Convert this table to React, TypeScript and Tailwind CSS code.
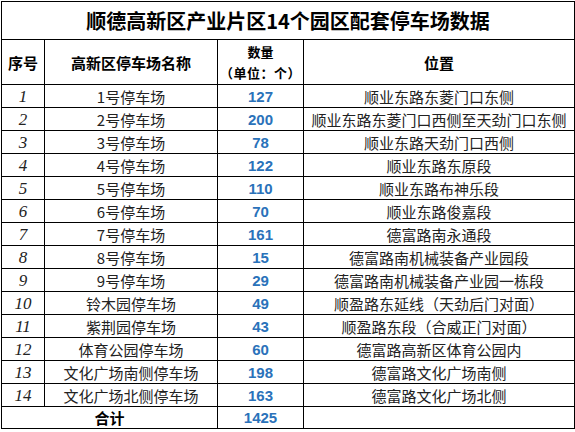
const rows: [string, number, string][] = [
  ["1号停车场", 127, "顺业东路东菱门口东侧"],
  ["2号停车场", 200, "顺业东路东菱门口西侧至天劲门口东侧"],
  ["3号停车场", 78, "顺业东路天劲门口西侧"],
  ["4号停车场", 122, "顺业东路东原段"],
  ["5号停车场", 110, "顺业东路布神乐段"],
  ["6号停车场", 70, "顺业东路俊嘉段"],
  ["7号停车场", 161, "德富路南永通段"],
  ["8号停车场", 15, "德富路南机械装备产业园段"],
  ["9号停车场", 29, "德富路南机械装备产业园一栋段"],
  ["铃木园停车场", 49, "顺盈路东延线（天劲后门对面）"],
  ["紫荆园停车场", 43, "顺盈路东段（合威正门对面）"],
  ["体育公园停车场", 60, "德富路高新区体育公园内"],
  ["文化广场南侧停车场", 198, "德富路文化广场南侧"],
  ["文化广场北侧停车场", 163, "德富路文化广场北侧"],
];

const cjk = "font-['Noto_Sans_CJK_SC',sans-serif]";
const cell = "border border-black p-0 text-center align-middle leading-none";

export default function App() {
  const total = rows.reduce((s, r) => s + r[1], 0);
  return (
    <div className="h-[432px] w-[575px] overflow-hidden bg-white pl-px pt-px">
      <table className={`w-[573px] table-fixed border-collapse ${cjk} text-[#222]`}>
        <colgroup>
          <col className="w-[43px]" />
          <col className="w-[173px]" />
          <col className="w-[86px]" />
          <col className="w-[271px]" />
        </colgroup>
        <tbody>
          <tr>
            <td colSpan={4} className={`${cell} h-[38px] text-[20px] font-bold text-black`}>
              顺德高新区产业片区14个园区配套停车场数据
            </td>
          </tr>
          <tr className="font-bold text-black">
            <td className={`${cell} h-[45px] text-[15px]`}>序号</td>
            <td className={`${cell} text-[15px]`}>高新区停车场名称</td>
            <td className={`${cell} text-[13px]`}>
              <div>数量</div>
              <div className="mt-[8px] text-[13px] tracking-[0.5px]">（单位：个）</div>
            </td>
            <td className={`${cell} text-[15px]`}>位置</td>
          </tr>
          {rows.map(([name, n, loc], i) => (
            <tr key={i}>
              <td
                className={`${cell} h-[23px] font-['Liberation_Serif',serif] text-[17px] italic text-[#222]`}
              >
                {i + 1}
              </td>
              <td className={`${cell} text-[15px]`}>{name}</td>
              <td className={`${cell} font-['Liberation_Sans',sans-serif] text-[15px] font-bold text-[#2a72ba]`}>
                {n}
              </td>
              <td className={`${cell} text-[15px]`}>{loc}</td>
            </tr>
          ))}
          <tr>
            <td colSpan={2} className={`${cell} h-[22px] text-[15px] font-bold text-black`}>
              合计
            </td>
            <td className={`${cell} font-['Liberation_Sans',sans-serif] text-[15px] font-bold text-[#2a72ba]`}>
              {total}
            </td>
            <td className={cell}></td>
          </tr>
        </tbody>
      </table>
    </div>
  );
}
